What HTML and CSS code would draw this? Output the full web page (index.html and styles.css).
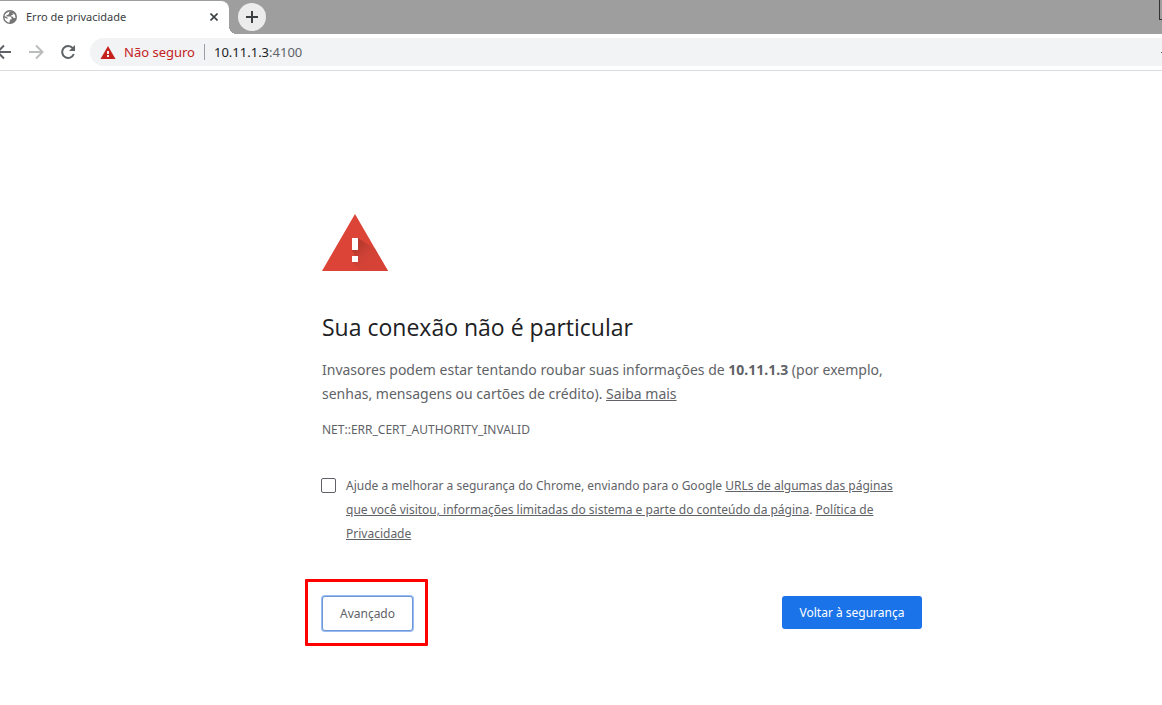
FILE: index.html
```html
<!DOCTYPE html>
<html lang="pt-BR">

<head>
    <meta charset="UTF-8">
    <meta name="viewport" content="width=device-width, initial-scale=1.0">
    <title>Erro de privacidade</title>
    <link rel="stylesheet" href="styles.css">
</head>

<body>

    <header class="browser">
        <div class="tabs">
            <div class="tab">
                <svg class="globe" width="14" height="14" viewBox="0 0 14 14">
                    <circle cx="7" cy="7" r="7" fill="#757575"/>
                    <path d="M8 1.500L6 2.500V4L4.500 5H3.500V6.500H7.500L8.500 8V9.500H7L6.500 12.500C4 12.500 1.500 10 1.500 7.500L4.500 9V7.500L1.500 6C2 3.500 4.500 1.200 8 1.500ZM9.500 3L12 5L12.500 8H10.500L9.500 6.500H8L8.500 5H10Z" fill="#fff"/>
                </svg>
                <span class="tab-title">Erro de privacidade</span>
                <button class="close" aria-label="Fechar">
                    <svg width="8" height="8" viewBox="0 0 8 8" fill="none" stroke="#3c4043" stroke-width="1.600">
                        <path d="M0.500 0.500L7.500 7.500M7.500 0.500L0.500 7.500"/>
                    </svg>
                </button>
            </div>
            <button class="new-tab" aria-label="Nova guia">
                <svg width="12" height="12" viewBox="0 0 12 12" stroke="#3c4043" stroke-width="2">
                    <path d="M6 0V12M0 6H12"/>
                </svg>
            </button>
            <span class="window-edge"></span>
        </div>

        <div class="toolbar">
            <button class="nav back" aria-label="Voltar">
                <svg width="16" height="16" viewBox="0 0 16 16" fill="none" stroke="#5f6368" stroke-width="2">
                    <path d="M15 8H2M8 1.500L1.500 8L8 14.500"/>
                </svg>
            </button>
            <button class="nav" aria-label="Avançar">
                <svg width="16" height="16" viewBox="0 0 16 16" fill="none" stroke="#babcbe" stroke-width="2">
                    <path d="M1 8H14M8 1.500L14.500 8L8 14.500"/>
                </svg>
            </button>
            <button class="nav" aria-label="Recarregar">
                <svg width="16" height="16" viewBox="0 0 16 16">
                    <path d="M12.800 4.200A6 6 0 1 0 13.800 10" fill="none" stroke="#5f6368" stroke-width="2"/>
                    <path d="M15 1V7H9Z" fill="#5f6368"/>
                </svg>
            </button>
            <div class="address">
                <svg width="16" height="14" viewBox="0 0 16 14">
                    <path d="M8 1L15.500 14H0.500Z" fill="#c5221f"/>
                    <path d="M7 6H9V9H7ZM7 10H9V12H7Z" fill="#f1f3f4"/>
                </svg>
                <span class="not-secure">Não seguro</span>
                <span class="url">10.11.1.3<span class="port">:4100</span></span>
                <span class="dash"></span>
            </div>
        </div>
    </header>

    <main>
        <div class="content">
            <svg class="warning" width="66" height="57" viewBox="0 0 66 57">
                <defs>
                    <linearGradient id="shadow" gradientUnits="userSpaceOnUse" x1="34" y1="34" x2="50" y2="50">
                        <stop offset="0" stop-color="#b93a2e"/>
                        <stop offset="0.500" stop-color="#d04236"/>
                        <stop offset="1" stop-color="#d64336"/>
                    </linearGradient>
                </defs>
                <path d="M33 0L66 57H0Z" fill="#db4437"/>
                <path d="M36 24L53 35L66 57H39L30 48L33 42L30 36Z" fill="url(#shadow)"/>
                <path d="M30 24H36V36H30ZM30 42H36V48H30Z" fill="#fff"/>
            </svg>

            <h1>Sua conexão não é particular</h1>
            <p class="message">Invasores podem estar tentando roubar suas informações de <strong>10.11.1.3</strong> (por exemplo, senhas, mensagens ou cartões de crédito). <a href="#">Saiba mais</a></p>
            <p class="error-code">NET::ERR_CERT_AUTHORITY_INVALID</p>

            <div class="report">
                <input type="checkbox" id="report">
                <label for="report">Ajude a melhorar a segurança do Chrome, enviando para o Google <a href="#">URLs de algumas das páginas que você visitou, informações limitadas do sistema e parte do conteúdo da página</a>. <a href="#">Política de Privacidade</a></label>
            </div>

            <div class="buttons">
                <div class="marked">
                    <button class="advanced">Avançado</button>
                </div>
                <button class="safety">Voltar à segurança</button>
            </div>
        </div>
    </main>

</body>

</html>
```

FILE: styles.css
```css
* {
    box-sizing: border-box;
}

body {
    margin: 0;
    background-color: #fff;
    color: #5f6368;
    font-family: "Noto Sans", "Open Sans", sans-serif;
    overflow-x: hidden;
}

button {
    padding: 0;
    border: none;
    background: none;
    font-family: inherit;
}

a {
    color: inherit;
}

/* browser bar */
.tabs {
    display: flex;
    align-items: center;
    height: 34px;
    background-color: #9e9e9e;
    position: relative;
}

.tab {
    display: flex;
    align-items: center;
    align-self: flex-end;
    width: 229px;
    height: 33px;
    padding: 0 10px 2px 3px;
    background-color: #fff;
    border-radius: 0 8px 0 0;
}

.tab-title {
    flex: 1;
    margin-left: 9px;
    font-size: 11px;
    color: #3c4043;
}

.close,
.nav {
    display: flex;
    align-items: center;
    justify-content: center;
}

.close {
    width: 10px;
}

.new-tab {
    display: flex;
    align-items: center;
    justify-content: center;
    width: 28px;
    height: 28px;
    margin-left: 9px;
    border-radius: 50%;
    background-color: #ececec;
}

/* the strip ends in a rounded corner where it meets the tab */
.tabs::before {
    content: "";
    position: absolute;
    left: 229px;
    bottom: 0;
    width: 8px;
    height: 8px;
    background: radial-gradient(circle at 100% 0, #9e9e9e 8px, #fff 8px);
}

.window-edge {
    position: absolute;
    top: 0;
    right: 0;
    width: 3px;
    height: 20px;
    border-left: 1px solid #333;
    border-bottom: 1px solid #333;
}

.toolbar {
    display: flex;
    align-items: center;
    height: 37px;
    border-bottom: 1px solid #dadce0;
}

.nav {
    width: 32px;
}

.back {
    margin-left: -12px;
}

.address {
    display: flex;
    align-items: center;
    flex: 1;
    height: 28px;
    margin-left: 6px;
    padding-left: 10px;
    border-radius: 14px 0 0 14px;
    background-color: #f1f3f4;
    font-size: 13px;
}

.not-secure {
    margin-left: 8px;
    color: #c5221f;
}

.url {
    margin-left: 9px;
    padding-left: 9px;
    border-left: 1px solid #9aa0a6;
    line-height: 16px;
    color: #202124;
}

.port {
    color: #5f6368;
}

.dash {
    width: 1px;
    height: 1px;
    margin-left: auto;
    background-color: #5f6368;
}

/* warning page */
main {
    padding: 143px 0 56px 82px;
}

.content {
    max-width: 600px;
    margin: 0 auto;
}

.warning {
    display: block;
}

h1 {
    margin: 40px 0 15px;
    font-family: "Open Sans", sans-serif;
    font-size: 23px;
    font-weight: 400;
    line-height: 32px;
    color: #202124;
}

p {
    margin: 0;
    line-height: 24px;
}

.message {
    font-size: 14px;
}

.error-code {
    margin-top: 12px;
    font-size: 12px;
}

.report {
    display: flex;
    align-items: flex-start;
    gap: 10px;
    margin-top: 32px;
    padding-right: 12px;
    font-size: 12px;
    line-height: 24px;
}

.report input {
    appearance: none;
    flex: none;
    width: 15px;
    height: 15px;
    margin: 4px 0 0 -1px;
    border: 1px solid #5f6368;
    border-radius: 2px;
}

.buttons {
    display: flex;
    align-items: flex-start;
    justify-content: space-between;
    margin-top: 50px;
}

.buttons button {
    border-radius: 3px;
    font-size: 12px;
}

.marked {
    position: relative;
}

.marked::after {
    content: "";
    position: absolute;
    inset: -17px -15px -15px -17px;
    border: 3px solid #f00;
    border-radius: 1px;
    pointer-events: none;
}

.advanced {
    display: block;
    width: 91px;
    height: 35px;
    border: 1px solid #6f96d6;
    box-shadow: 0 0 0 1px #9abcf5;
    background-color: #fff;
    color: #5f6368;
}

.safety {
    width: 140px;
    height: 33px;
    background-color: #1a73e8;
    color: #fff;
}
```
